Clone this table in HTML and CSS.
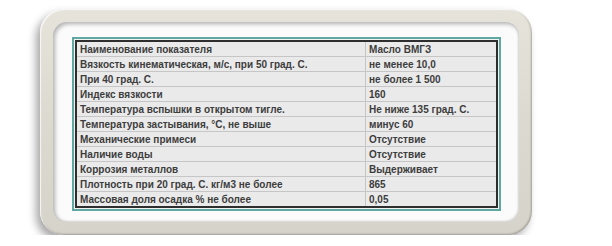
FILE: index.html
```html
<!DOCTYPE html>
<html>
<head>
<meta charset="utf-8">
<link rel="stylesheet" href="styles.css">
</head>
<body>
<div class="frame">
  <div class="panel">
    <div class="teal">
      <table class="spec">
        <tr><td class="name">Наименование показателя</td><td>Масло ВМГЗ</td></tr>
        <tr><td class="name">Вязкость кинематическая, м/с, при 50 град. С.</td><td>не менее 10,0</td></tr>
        <tr><td class="name">При 40 град. С.</td><td>не более 1 500</td></tr>
        <tr><td class="name">Индекс вязкости</td><td>160</td></tr>
        <tr><td class="name">Температура вспышки в открытом тигле.</td><td>Не ниже 135 град. С.</td></tr>
        <tr><td class="name">Температура застывания, °С, не выше</td><td>минус 60</td></tr>
        <tr><td class="name">Механические примеси</td><td>Отсутствие</td></tr>
        <tr><td class="name">Наличие воды</td><td>Отсутствие</td></tr>
        <tr><td class="name">Коррозия металлов</td><td>Выдерживает</td></tr>
        <tr><td class="name">Плотность при 20 град. С. кг/м3 не более</td><td>865</td></tr>
        <tr><td class="name">Массовая доля осадка % не более</td><td>0,05</td></tr>
      </table>
    </div>
  </div>
</div>
</body>
</html>
```

FILE: styles.css
```css
html, body {
  margin: 0;
  background: #ffffff;
}
body {
  padding: 9px 0 0 40px;
  font-family: "Liberation Sans", Arial, sans-serif;
}
.frame {
  width: 492px;
  height: 226px;
  box-sizing: border-box;
  padding: 13px;
  border-radius: 24px;
  background: linear-gradient(180deg, #e6e3db 0%, #dcd9d0 50%, #d6d3ca 100%);
  box-shadow: -4px 5px 8px rgba(0,0,0,0.35), inset 1px 1px 1px rgba(255,255,255,0.8), inset -1px -1px 2px rgba(0,0,0,0.25);
}
.panel {
  height: 100%;
  box-sizing: border-box;
  background: #fbfbfb;
  border-radius: 14px;
  padding: 15px 0 0 19px;
  box-shadow: inset 2px 2px 4px rgba(0,0,0,0.3), inset -1px -1px 2px rgba(0,0,0,0.12);
}
.teal {
  width: 429px;
  box-sizing: border-box;
  border: 2px solid #5fa9a2;
  padding: 1px;
  background: #f2f2f2;
}
.spec {
  width: 100%;
  border-collapse: collapse;
  border: 2px solid #2e2e2e;
  background: #eaeaea;
}
.spec td {
  border: 1px solid #c6c6c6;
  height: 14px;
  padding: 0 0 0 3px;
  font-size: 10px;
  font-weight: bold;
  color: #3d3d3d;
  line-height: 13px;
  white-space: nowrap;
}
.spec td.name {
  width: 285px;
}
```
